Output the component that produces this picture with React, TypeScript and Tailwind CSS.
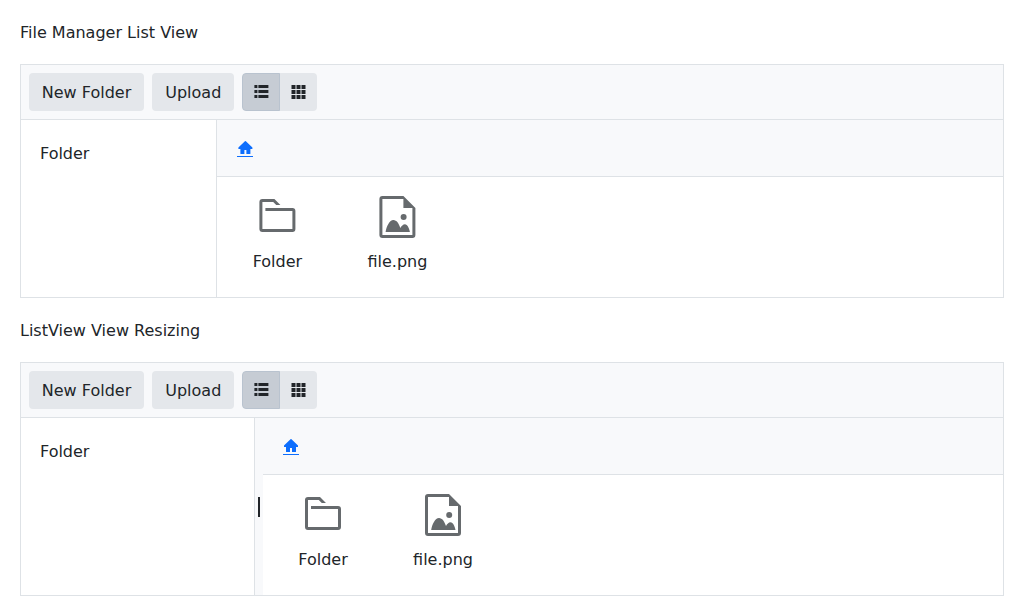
import React from 'react';

function ListIcon() {
  return (
    <svg className="block size-4" viewBox="-0.4 0 16 16" fill="currentColor">
      <path d="M1 1h3v3H1zM5 1h10v3H5zM1 6h3v3H1zM5 6h10v3H5zM1 11h3v3H1zM5 11h10v3H5z" />
    </svg>
  );
}

function GridIcon() {
  return (
    <svg className="block size-4" viewBox="0.5 0 16 16" fill="currentColor">
      <path d="M1 1h4v4H1zM6 1h4v4H6zM11 1h4v4h-4zM1 6h4v4H1zM6 6h4v4H6zM11 6h4v4h-4zM1 11h4v4H1zM6 11h4v4H6zM11 11h4v4h-4z" />
    </svg>
  );
}

function HomeIcon({ offset }: { offset: boolean }) {
  return (
    <svg className="block size-4" viewBox={offset ? '-0.4 0 16 16' : '0 0 16 16'} fill="currentColor">
      <path d="M7.500 1.200a.7.7 0 0 1 1 0L15 7.400V9h-2v4.500a.5.5 0 0 1-.5.5H9v-4H7v4H3.500a.5.5 0 0 1-.5-.5V9H1V7.400z" />
    </svg>
  );
}

function FolderIcon({ offset }: { offset: boolean }) {
  return (
    <svg className="block size-12" viewBox={offset ? '-0.4 0 48 48' : '0 0 48 48'} fill="currentColor">
      <path d="M9 6h12l6 6h-4.2l-3-3H9v27h30V18H12v-3h27a3 3 0 0 1 3 3v18a3 3 0 0 1-3 3H9a3 3 0 0 1-3-3V9a3 3 0 0 1 3-3z" />
    </svg>
  );
}

function ImageFileIcon({ offset }: { offset: boolean }) {
  return (
    <svg className="block size-12" viewBox={offset ? '-0.4 0 48 48' : '0 0 48 48'} fill="currentColor">
      <path
        fillRule="evenodd"
        d="M9 3h21l12 12v27a3 3 0 0 1-3 3H9a3 3 0 0 1-3-3V6a3 3 0 0 1 3-3zM9 6v36h30V15H30V6z"
      />
      <circle cx="30.2" cy="24" r="3" />
      <path d="M12.2 39c.8-5.500 4-12 7.800-12 3.200 0 5.500 3.600 7 8 1-2 2.700-3.800 4.500-3.800 2.600 0 4.300 4 5 7.800z" />
    </svg>
  );
}

function Item({ label, children }: { label: string; children: React.ReactNode }) {
  return (
    <div className="flex h-[120px] w-[120px] flex-col items-center pt-4 text-[#212529]">
      <span className="text-[#666a6d]">{children}</span>
      <span className="mt-[9px] leading-6">{label}</span>
    </div>
  );
}

function FileManager({ resizable = false }: { resizable?: boolean }) {
  return (
    <div className="border border-[#dee2e6]">
      <div className="flex h-[55px] gap-2 border-b border-[#dee2e6] bg-[#f8f9fb] p-2">
        <button className="h-[38px] w-[115px] rounded bg-[#e4e7eb] pt-0.5">New Folder</button>
        <button className="h-[38px] w-[82px] rounded bg-[#e4e7eb] pt-0.5 pl-[0.5px]">Upload</button>
        <div className="flex h-[38px] w-[75px] overflow-hidden rounded bg-[#e4e7eb]">
          <button className="flex w-[38px] shrink-0 items-center justify-center rounded-l border border-[#b9c3cf] bg-[#c6ccd4]">
            <ListIcon />
          </button>
          <button className="flex flex-1 items-center justify-center">
            <GridIcon />
          </button>
        </div>
      </div>
      <div className="flex h-[177px]">
        <div
          className={`shrink-0 border-r border-[#dee2e6] pt-[22px] pl-[19px] leading-6 ${
            resizable ? 'w-[234px]' : 'w-[196px]'
          }`}
        >
          Folder
        </div>
        {resizable && (
          <div className="flex w-2 shrink-0 items-center bg-[#f8f9fb] pl-[3px]">
            <div className="h-5 w-[2px] bg-[#212529]" />
          </div>
        )}
        <div className="flex-1">
          <div className="flex h-[57px] border-b border-[#dee2e6] bg-[#f8f9fb] pt-5 pl-5">
            <span className="h-[17px] border-b border-[#0d6efd] text-[#0d6efd]">
              <HomeIcon offset={!resizable} />
            </span>
          </div>
          <div className={resizable ? 'flex' : 'flex pl-[0.4px]'}>
            <Item label="Folder">
              <FolderIcon offset={!resizable} />
            </Item>
            <Item label="file.png">
              <ImageFileIcon offset={!resizable} />
            </Item>
          </div>
        </div>
      </div>
    </div>
  );
}

export default function App() {
  return (
    <main className="h-[616px] overflow-hidden bg-white px-5 pt-[21px] font-['DejaVu_Sans',sans-serif] text-base leading-6 text-[#212529]">
      <h2 className="mb-[19px]">File Manager List View</h2>
      <FileManager />
      <h2 className="mt-[21px] mb-[19px]">ListView View Resizing</h2>
      <FileManager resizable />
    </main>
  );
}
